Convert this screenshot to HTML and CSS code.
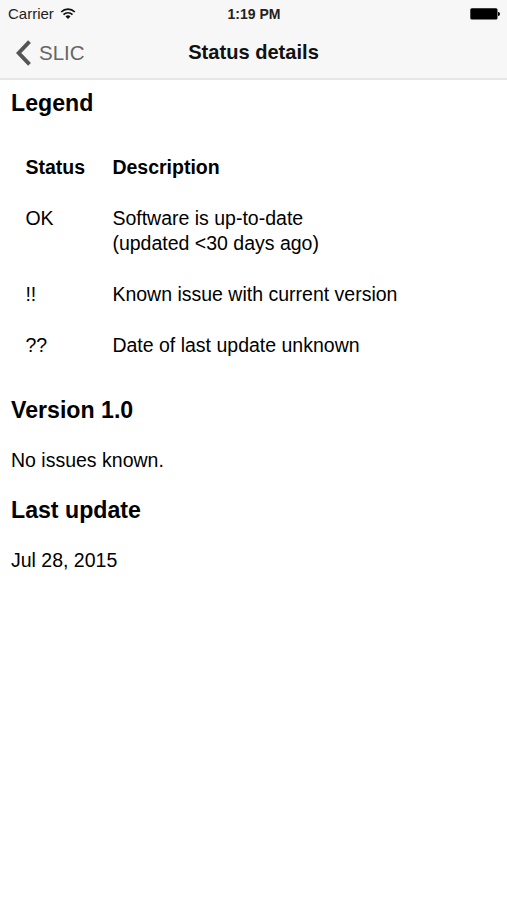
FILE: index.html
```html
<!DOCTYPE html>
<html lang="en">
<head>
    <meta charset="UTF-8">
    <meta name="viewport" content="width=device-width, initial-scale=1.0">
    <title>Status details</title>
    <link rel="stylesheet" href="styles.css">
</head>
<body>
    <header class="header">
        <div class="status-bar">
            <div class="carrier">
                <span>Carrier</span>
                <svg class="wifi" width="16" height="12" viewBox="0 0 16 12" fill="none" stroke="#111" stroke-width="1.7">
                    <path d="M1.2 4a9.7 9.7 0 0 1 13.6 0"/>
                    <path d="M3.5 6.6a6.4 6.4 0 0 1 9 0"/>
                    <path d="M8 11L5.5 8.5a3.5 3.5 0 0 1 5 0z" fill="#111" stroke="none"/>
                </svg>
            </div>
            <div class="time">1:19 PM</div>
            <div class="battery">
                <svg width="30" height="12" viewBox="0 0 30 12">
                    <rect x="0.3" y="0.3" width="27.2" height="11.2" rx="1.5"/>
                    <path d="M28 4a2 2 0 0 1 0 4z"/>
                </svg>
            </div>
        </div>
        <nav class="nav-bar">
            <a class="back" href="#">
                <svg width="17" height="26" viewBox="0 0 17 26" fill="none" stroke="#555" stroke-width="3.9">
                    <path d="M14.5 1.7L3.7 13L14.5 24.3"/>
                </svg>
                <span>SLIC</span>
            </a>
            <h1 class="title">Status details</h1>
        </nav>
    </header>
    <main class="content">
        <h2>Legend</h2>
        <table class="legend">
            <tr>
                <th>Status</th>
                <th>Description</th>
            </tr>
            <tr>
                <td>OK</td>
                <td>Software is up-to-date<br>(updated &lt;30 days ago)</td>
            </tr>
            <tr>
                <td>!!</td>
                <td>Known issue with current version</td>
            </tr>
            <tr>
                <td>??</td>
                <td>Date of last update unknown</td>
            </tr>
        </table>
        <h2>Version 1.0</h2>
        <p>No issues known.</p>
        <h2>Last update</h2>
        <p>Jul 28, 2015</p>
    </main>
</body>
</html>
```
FILE: styles.css
```css
body {
    margin: 0;
    background: #fff;
    color: #000;
    font-family: "Liberation Sans", Arial, sans-serif;
}
.header {
    box-sizing: border-box;
    height: 80px;
    background: #f7f7f7;
    border-bottom: 2px solid #e6e6e6;
}
.status-bar {
    display: grid;
    grid-template-columns: 1fr auto 1fr;
    align-items: center;
    height: 27px;
    padding: 0 7px 0 8px;
    font-size: 15px;
    color: #222;
}
.carrier {
    display: flex;
    align-items: center;
    gap: 6px;
}
.time {
    font-size: 14px;
    font-weight: bold;
}
.battery {
    display: flex;
    justify-content: flex-end;
}
.nav-bar {
    display: grid;
    grid-template-columns: 1fr auto 1fr;
    align-items: center;
    height: 51px;
    padding: 0 15px;
}
.back {
    display: flex;
    align-items: center;
    gap: 7px;
    color: #666;
    font-size: 20.5px;
    line-height: 22px;
    text-decoration: none;
}
.title {
    margin: 0;
    font-size: 20.1px;
    color: #111;
}
.content {
    padding: 9px 11px;
    font-size: 19.5px;
    line-height: 25px;
}
.content h2 {
    margin: 0;
    font-size: 23.15px;
    line-height: 28px;
}
.legend {
    margin: 25px 0;
    border-collapse: collapse;
}
.legend th,
.legend td {
    padding: 13px 13px 13px 14.4px;
    text-align: left;
    vertical-align: top;
}
.content p {
    margin: 24px 0 23px;
}
```
